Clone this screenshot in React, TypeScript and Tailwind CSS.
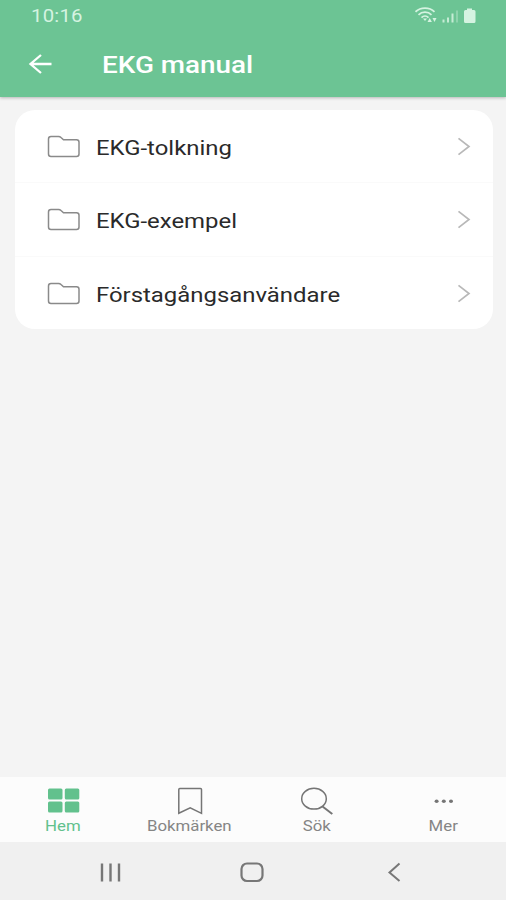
import type { ReactNode } from 'react'

const folders = ['EKG-tolkning', 'EKG-exempel', 'Förstagångsanvändare']

function StatusBar() {
  return (
    <div className="flex h-8 items-center justify-between pr-[27px] pl-[31px] text-[#d5f3e1]">
      <span className="origin-left scale-x-[1.13] text-[18px] leading-8 tracking-[0.2px]">10:16</span>
      <svg width="64" height="20" viewBox="0 0 64 20" fill="none" stroke="currentColor" strokeWidth="1.7">
        <path d="M0.5 5.8C5.5 0.9 14.5 0.9 19.5 5.8M3.5 8.8C7 5.3 13 5.3 16.5 8.8M6.5 11.6C8.5 9.6 11.5 9.6 13.5 11.6" />
        <path d="M8 12.5h4l-2 2.5zM12.5 16l2.2-4 2.2 4zM17.5 12h4l-2 4z" fill="currentColor" stroke="none" />
        <path d="M28.5 16.5v-3M33 16.5v-5M37.5 16.5V7.5" strokeWidth="2" opacity="0.85" />
        <path d="M42 16.5V4.5" opacity="0.4" />
        <path d="M52 2.5h5v1.5h2q1.500 0 1.500 1.500V15.5q0 1.500-1.500 1.500h-8.500Q49 17 49 15.5V5.5Q49 4 50.5 4H52z" fill="currentColor" stroke="none" />
      </svg>
    </div>
  )
}

function Header() {
  return (
    <header className="relative h-[97px] bg-[#6cc494] shadow-[0_1px_3px_rgba(0,0,0,0.25)]">
      <StatusBar />
      <div className="flex h-[65px] items-center pl-7 text-white">
        <button className="w-[73.5px]" aria-label="Tillbaka">
          <svg className="-mt-0.5" width="25" height="22" viewBox="0 0 25 22" fill="none" stroke="currentColor" strokeWidth="2.3">
            <path d="M23.5 11H2.5M13 2L2.5 11L13 20" />
          </svg>
        </button>
        <h1 className="origin-left scale-x-[1.16] text-2xl font-medium">EKG manual</h1>
      </div>
    </header>
  )
}

function FolderRow({ label }: { label: string }) {
  return (
    <li className="flex h-[73.3px] items-center pt-px pr-[22px] pl-[32px] text-[#2a2a2a]">
      <svg width="34" height="24" viewBox="0 0 34 24" fill="none" stroke="#8a8a8a" strokeWidth="1.5">
        <path d="M1.5 4Q1.5 1.500 4 1.500H11.5Q13 1.500 14 2.5L16.5 4.8H29.5Q32 4.8 32 7.3V19Q32 21.5 29.5 21.5H4Q1.5 21.5 1.5 19Z" />
      </svg>
      <span className="ml-[15px] origin-left scale-x-[1.195] pt-0.5 text-[20px]">{label}</span>
      <svg className="ml-auto" width="14" height="20" viewBox="0 0 14 20" fill="none" stroke="#b8b8b8" strokeWidth="1.7">
        <path d="M1.5 1.3L12 9.5L1.5 17.7" />
      </svg>
    </li>
  )
}

function Tab({ label, active, children }: { label: string; active?: boolean; children: ReactNode }) {
  return (
    <button className={`flex flex-1 flex-col items-center pt-2 ${active ? 'text-[#62c18d]' : 'text-[#757575]'}`}>
      <svg width="34" height="30" viewBox="0 0 34 30" fill="none" stroke="currentColor" strokeWidth="1.5">
        {children}
      </svg>
      <span className={`mt-px scale-x-[1.2] text-[14px] leading-5 ${active ? '' : 'text-[#858585]'}`}>{label}</span>
    </button>
  )
}

function TabBar() {
  return (
    <nav className="flex h-[65px] bg-[#fcfcfc]">
      <Tab label="Hem" active>
        <g fill="currentColor" stroke="none">
          <rect x="2" y="3.5" width="14.5" height="11" rx="1.5" />
          <rect x="18.8" y="3.5" width="14.5" height="11" rx="1.5" />
          <rect x="2" y="16.5" width="14.5" height="11" rx="1.5" />
          <rect x="18.8" y="16.5" width="14.5" height="11" rx="1.5" />
        </g>
      </Tab>
      <Tab label="Bokmärken">
        <path d="M5.8 4.5Q5.8 3.5 6.8 3.5H27.5Q28.500 3.5 28.500 4.5V28.3L17.2 22.8L5.8 28.3Z" />
      </Tab>
      <Tab label="Sök">
        <ellipse cx="15" cy="13.7" rx="12.3" ry="10.4" />
        <path d="M23.5 21.5L33.3 29" strokeWidth="2" />
      </Tab>
      <Tab label="Mer">
        <g fill="currentColor" stroke="none">
          <ellipse cx="10.600" cy="16.3" rx="2" ry="1.7" />
          <ellipse cx="17.8" cy="16.3" rx="2" ry="1.7" />
          <ellipse cx="25" cy="16.3" rx="2" ry="1.7" />
        </g>
      </Tab>
    </nav>
  )
}

function SystemNav() {
  return (
    <div className="flex h-[58px] items-center bg-[#f0f0f0] pt-1 pl-[98px] text-[#777777]">
      <svg width="26" height="22" viewBox="0 0 26 22" fill="none" stroke="currentColor" strokeWidth="2.4">
        <path d="M4 1.5v18M12.5 1.5v18M21 1.5v18" />
      </svg>
      <svg className="ml-[116px]" width="24" height="22" viewBox="0 0 24 22" fill="none" stroke="currentColor" strokeWidth="2.2">
        <rect x="1.5" y="1.5" width="21" height="17.5" rx="5.5" />
      </svg>
      <svg className="ml-[122px]" width="16" height="22" viewBox="0 0 16 22" fill="none" stroke="currentColor" strokeWidth="2">
        <path d="M13.5 1.5L3.5 10.5L13.5 19" />
      </svg>
    </div>
  )
}

export default function App() {
  return (
    <div className="flex h-[900px] w-[506px] flex-col overflow-hidden bg-[#f4f4f4] font-['Roboto',sans-serif]">
      <Header />
      <main className="flex-1 pt-[13px] pr-[13px] pl-[15px]">
        <ul className="h-[219px] divide-y divide-[#fafafa] rounded-[20px] bg-white">
          {folders.map((label) => (
            <FolderRow key={label} label={label} />
          ))}
        </ul>
      </main>
      <TabBar />
      <SystemNav />
    </div>
  )
}
